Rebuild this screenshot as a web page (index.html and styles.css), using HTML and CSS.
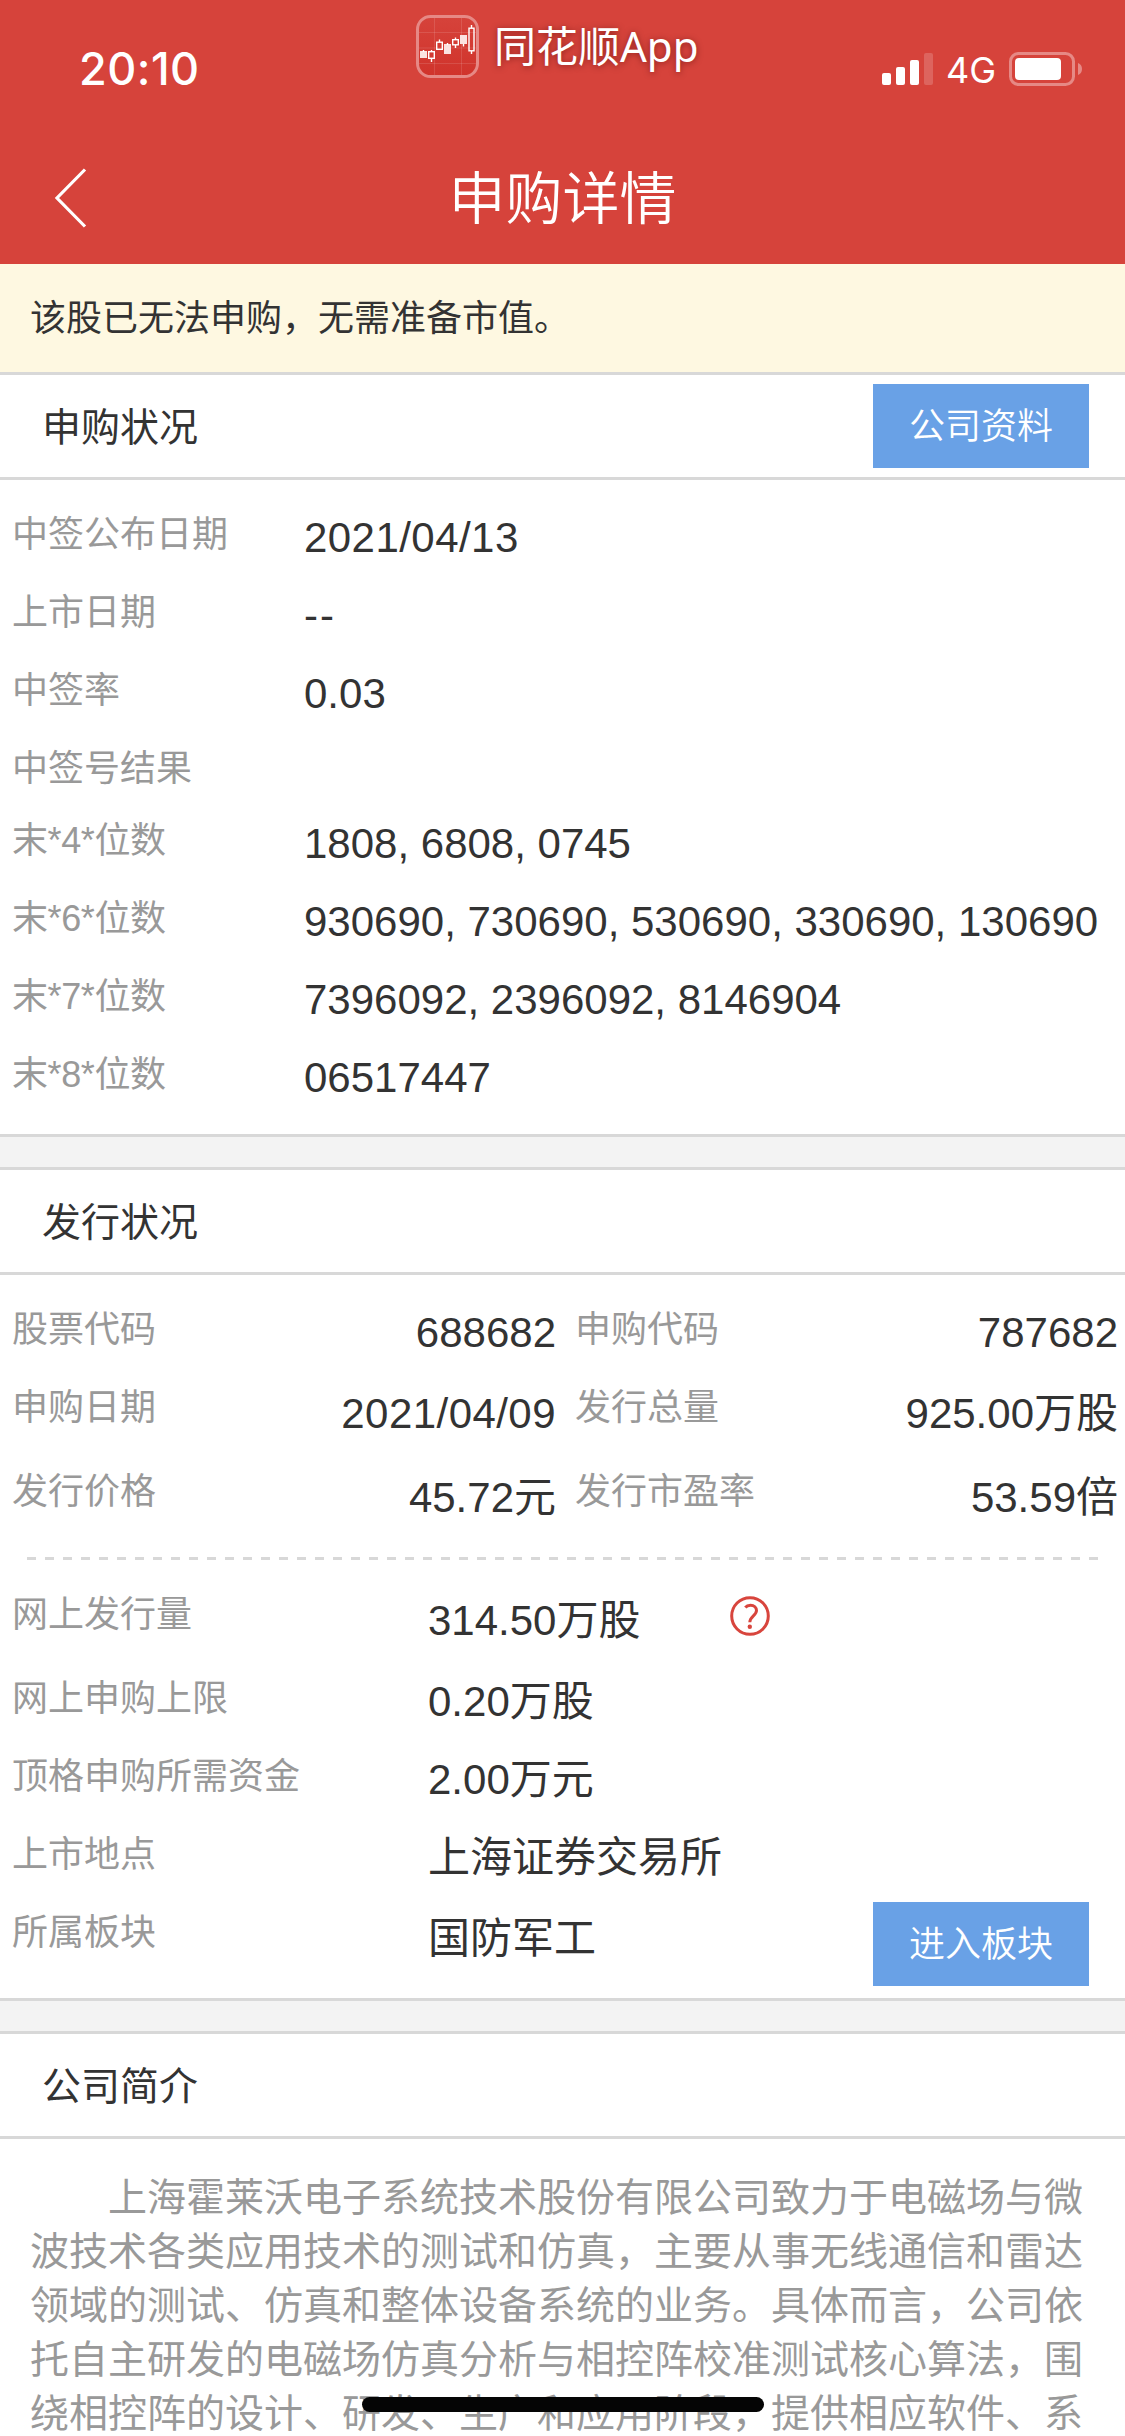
FILE: index.html
```html
<!DOCTYPE html>
<html lang="zh-CN">
<head>
<meta charset="utf-8">
<title>申购详情</title>
<link rel="stylesheet" href="styles.css">
</head>
<body>
<div class="screen">
  <header class="header">
    <div class="status">
      <span class="time">20:10</span>
      <div class="brand">
        <svg class="brand-icon" width="63" height="63" viewBox="0 0 63 63">
          <defs><linearGradient id="g" x1="0" y1="0" x2="0" y2="1"><stop offset="0" stop-color="#d6433b"/><stop offset="1" stop-color="#d0332b"/></linearGradient></defs>
          <rect x="1.5" y="1.5" width="60" height="60" rx="13" fill="url(#g)"/>
          <path d="M3 17.500H60M3 33H60M3 48.500H60M18.500 3V60M45.500 3V60" stroke="#fff" stroke-opacity=".12" fill="none"/>
          <g fill="#fbe3e1"><rect x="4" y="36" width="7" height="7"/><rect x="28" y="29" width="7" height="10"/><rect x="44" y="20" width="7" height="9"/></g>
          <g fill="none" stroke="#fff" stroke-width="1.400"><path d="M7.500 35V37M15.500 35V37M15.500 44V47M23.500 24.500V27M31.500 28V30M39.500 22.500V24M39.500 30V33M47.500 29V31.500M55.500 10V13M55.500 36V39"/><rect x="12.700" y="36.700" width="5.600" height="6.600"/><rect x="20.700" y="27.200" width="5.600" height="7.100"/><rect x="36.700" y="24.700" width="5.600" height="5.100"/><rect x="53" y="13.200" width="5" height="22.600"/></g>
          <rect x="1.500" y="1.500" width="60" height="60" rx="13" fill="none" stroke="#e68985" stroke-width="3"/>
        </svg>
        <span class="brand-name">同花顺<span class="brand-latin">App</span></span>
      </div>
      <div class="signal">
        <svg width="52" height="33" viewBox="0 0 52 33">
          <g fill="#fff"><rect x="0" y="20" width="9" height="12" rx="2"/><rect x="14" y="14" width="9" height="18" rx="2"/><rect x="28" y="7" width="9" height="25" rx="2"/><rect x="42" y="0" width="9" height="32" rx="2" opacity=".18"/></g>
        </svg>
        <span class="net">4G</span>
        <svg class="battery" width="74" height="34" viewBox="0 0 74 34">
          <rect x="1.500" y="1.500" width="63" height="31" rx="8" fill="none" stroke="#e68985" stroke-width="3"/>
          <rect x="6" y="6" width="46" height="22" rx="4" fill="#fff"/>
          <path d="M69 11a6.500 6.500 0 0 1 0 12z" fill="#e68985"/>
        </svg>
      </div>
    </div>
    <div class="nav">
      <svg class="back" width="34" height="64" viewBox="0 0 34 64"><path d="M31 3.500L3 32L31 60.500" fill="none" stroke="#fff" stroke-width="3.200"/></svg>
      <h1 class="title">申购详情</h1>
    </div>
  </header>
  <p class="notice">该股已无法申购，无需准备市值。</p>

  <section class="panel">
    <div class="panel-head"><h2>申购状况</h2><a class="btn">公司资料</a></div>
    <dl class="results">
      <div class="row"><dt>中签公布日期</dt><dd class="date">2021/04/13</dd></div>
      <div class="row"><dt>上市日期</dt><dd class="empty">--</dd></div>
      <div class="row"><dt>中签率</dt><dd>0.03</dd></div>
      <div class="row row-short"><dt>中签号结果</dt><dd></dd></div>
      <div class="row"><dt class="digits">末*4*位数</dt><dd>1808, 6808, 0745</dd></div>
      <div class="row"><dt class="digits">末*6*位数</dt><dd>930690, 730690, 530690, 330690, 130690</dd></div>
      <div class="row"><dt class="digits">末*7*位数</dt><dd>7396092, 2396092, 8146904</dd></div>
      <div class="row"><dt class="digits">末*8*位数</dt><dd>06517447</dd></div>
    </dl>
  </section>

  <section class="panel">
    <div class="panel-head"><h2>发行状况</h2></div>
    <dl class="pairs">
      <div class="row"><dt>股票代码</dt><dd>688682</dd><dt>申购代码</dt><dd>787682</dd></div>
      <div class="row row-cjk"><dt>申购日期</dt><dd class="date">2021/04/09</dd><dt>发行总量</dt><dd>925.00万股</dd></div>
      <div class="row row-cjk"><dt>发行价格</dt><dd>45.72元</dd><dt>发行市盈率</dt><dd>53.59倍</dd></div>
    </dl>
    <svg class="divider" width="1071" height="3"><path d="M0 1.500H1071" stroke="#d8d8d8" stroke-width="3" stroke-dasharray="9 9"/></svg>
    <dl class="details">
      <div class="row row-cjk"><dt>网上发行量</dt><dd>314.50万股</dd>
        <svg class="help" width="40" height="40" viewBox="0 0 40 40" fill="none" stroke="#d8453d"><circle cx="20" cy="20" r="18.300" stroke-width="3"/><path d="M15.300 11.500C16.500 10 18.200 9.300 20.500 9.300C24.200 9.300 26.500 11.500 26.500 14.600C26.500 19.500 19.800 20.500 19.800 26.300" stroke-width="3"/><circle cx="19.800" cy="30.800" r="2.200" fill="#d8453d" stroke="none"/></svg>
      </div>
      <div class="row"><dt>网上申购上限</dt><dd>0.20万股</dd></div>
      <div class="row"><dt>顶格申购所需资金</dt><dd>2.00万元</dd></div>
      <div class="row"><dt>上市地点</dt><dd>上海证券交易所</dd></div>
      <div class="row row-cjk row-last"><dt>所属板块</dt><dd>国防军工</dd><a class="btn">进入板块</a></div>
    </dl>
  </section>

  <section class="panel panel-about">
    <div class="panel-head"><h2>公司简介</h2></div>
    <p class="about">上海霍莱沃电子系统技术股份有限公司致力于电磁场与微波技术各类应用技术的测试和仿真，主要从事无线通信和雷达领域的测试、仿真和整体设备系统的业务。具体而言，公司依托自主研发的电磁场仿真分析与相控阵校准测试核心算法，围绕相控阵的设计、研发、生产和应用阶段，提供相应软件、系</p>
  </section>
  <div class="home-bar"></div>
</div>
</body>
</html>
```
FILE: styles.css
```css
*, *::before { box-sizing: border-box; margin: 0; padding: 0; }

body {
  width: 1125px;
  background: #fff;
  color: #333;
  font-family: "Liberation Sans", "Noto Sans CJK SC", sans-serif;
}

.screen { position: relative; width: 1125px; height: 2436px; overflow: hidden; }

.header { height: 264px; background: #d6433b; color: #fff; }

.status {
  display: grid;
  grid-template-columns: 416px 1fr 250px;
  height: 132px;
}
.time { padding: 42px 0 0 79px; font: 550 45px/54px Inter, sans-serif; letter-spacing: .5px; }
.brand { display: flex; align-items: flex-start; padding-top: 15px; }
.brand-name {
  margin: -1px 0 0 15px;
  font: 400 42px/60px "Noto Sans CJK SC", sans-serif;
  text-shadow: 0 1px 6px rgba(70, 0, 0, .5);
}
.brand-latin { font-family: "Noto Sans", sans-serif; font-weight: 400; font-size: 42px; line-height: 1; }
.signal { display: flex; align-items: flex-start; padding: 53px 0 0 7px; }
.net { width: 65px; margin: -4px 0 0 12px; font: 400 36px/42px Inter, sans-serif; }
.battery { margin-top: -1px; margin-left: -2px; }

.nav { display: grid; grid-template-columns: 1fr 300px 1fr; height: 132px; }
.back { margin: 34px 0 0 54px; }
.title { font: 350 57px/84px "Noto Sans CJK SC", sans-serif; text-align: center; padding-top: 20px; white-space: nowrap; }

.notice {
  height: 108px;
  padding-left: 30px;
  background: #fef8e1;
  font-size: 36px;
  line-height: 109px;
}

.panel { border-top: 3px solid #d8d8d8; }
.panel + .panel { border-top: 0; }
.panel + .panel::before {
  content: "";
  display: block;
  height: 36px;
  background: #f3f3f3;
  border: solid #d8d8d8;
  border-width: 3px 0;
}
.panel-head {
  display: flex;
  align-items: center;
  justify-content: space-between;
  height: 105px;
  padding: 0 36px 0 42px;
  border-bottom: 3px solid #d8d8d8;
}
.panel-head h2 { padding-top: 3px; font-size: 39px; font-weight: 400; line-height: 58px; }

.btn {
  width: 216px;
  height: 84px;
  background: #69a1e6;
  color: #fff;
  font-size: 36px;
  font-weight: 350;
  line-height: 85px;
  text-align: center;
}

.row { display: flex; height: 78px; white-space: nowrap; }
.row-short { height: 72px; }
.row-cjk { height: 84px; }
dt { color: #999; font-size: 36px; line-height: 56px; }
dd { font-size: 42px; line-height: 62px; }
.date { letter-spacing: .45px; }
.empty { letter-spacing: 2px; }
.digits { letter-spacing: -.4px; }

.results { height: 654px; padding: 27px 0 0 12px; }
.results dt { width: 292px; }

.pairs { padding: 27px 7px 0 12px; height: 282px; }
.pairs .row { display: grid; grid-template-columns: 180px 364px 19px 180px 1fr; }
.pairs dd { text-align: right; }
.pairs dt:nth-of-type(2) { grid-column: 4; }
.row-cjk dd { padding-top: 3px; }

.divider { display: block; margin-left: 27px; }

.details { height: 438px; padding: 27px 0 0 12px; }
.details dt { width: 416px; }
.help { margin: 9px 0 0 90px; }
.row-last .btn { margin: -3px 36px 0 auto; }

.about {
  width: 1056px;
  margin: 32px 0 0 30px;
  color: #999;
  font-size: 39px;
  line-height: 54px;
  text-indent: 2em;
}

.home-bar {
  position: absolute;
  left: 362px;
  top: 2397px;
  width: 402px;
  height: 15px;
  border-radius: 8px;
  background: #050505;
}
```
